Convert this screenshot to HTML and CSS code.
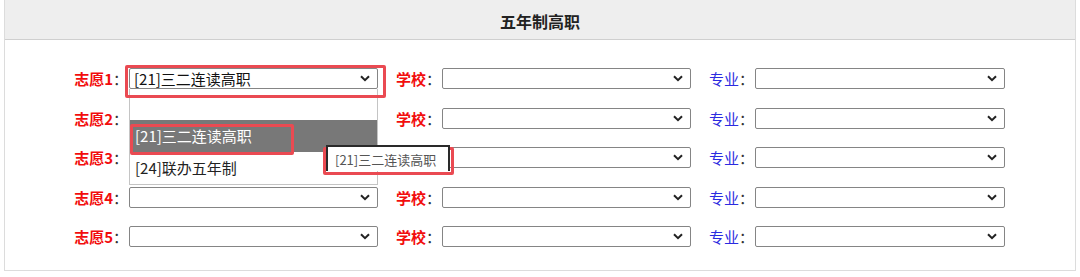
FILE: index.html
```html
<!DOCTYPE html>
<html lang="zh-CN">
<head>
  <meta charset="UTF-8" />
  <title>五年制高职</title>
  <link rel="stylesheet" href="styles.css">
</head>
<body>
  <div class="panel">
    <div class="panel-head">五年制高职</div>

    <div class="panel-body">
      <!-- 志愿1 -->
      <div class="lbl red">志愿1<span class="colon">：</span></div>
      <div class="select-wrap">
        <div class="select"><span>[21]三二连读高职</span><svg class="arrow" width="10" height="7" viewBox="0 0 10 7"><path d="M1 1.2 L5 5.2 L9 1.2" /></svg></div>
        <ul class="options">
          <li></li>
          <li class="hover">[21]三二连读高职</li>
          <li>[24]联办五年制</li>
        </ul>
      </div>
      <div class="lbl red">学校<span class="colon">：</span></div>
      <div class="select"><span></span><svg class="arrow" width="10" height="7" viewBox="0 0 10 7"><path d="M1 1.2 L5 5.2 L9 1.2" /></svg></div>
      <div class="lbl blue">专业<span class="colon">：</span></div>
      <div class="select"><span></span><svg class="arrow" width="10" height="7" viewBox="0 0 10 7"><path d="M1 1.2 L5 5.2 L9 1.2" /></svg></div>

      <!-- 志愿2 -->
      <div class="lbl red">志愿2<span class="colon">：</span></div>
      <div class="select"><span></span><svg class="arrow" width="10" height="7" viewBox="0 0 10 7"><path d="M1 1.2 L5 5.2 L9 1.2" /></svg></div>
      <div class="lbl red">学校<span class="colon">：</span></div>
      <div class="select"><span></span><svg class="arrow" width="10" height="7" viewBox="0 0 10 7"><path d="M1 1.2 L5 5.2 L9 1.2" /></svg></div>
      <div class="lbl blue">专业<span class="colon">：</span></div>
      <div class="select"><span></span><svg class="arrow" width="10" height="7" viewBox="0 0 10 7"><path d="M1 1.2 L5 5.2 L9 1.2" /></svg></div>

      <!-- 志愿3 -->
      <div class="lbl red">志愿3<span class="colon">：</span></div>
      <div class="select"><span></span><svg class="arrow" width="10" height="7" viewBox="0 0 10 7"><path d="M1 1.2 L5 5.2 L9 1.2" /></svg></div>
      <div class="lbl red">学校<span class="colon">：</span></div>
      <div class="select"><span></span><svg class="arrow" width="10" height="7" viewBox="0 0 10 7"><path d="M1 1.2 L5 5.2 L9 1.2" /></svg></div>
      <div class="lbl blue">专业<span class="colon">：</span></div>
      <div class="select"><span></span><svg class="arrow" width="10" height="7" viewBox="0 0 10 7"><path d="M1 1.2 L5 5.2 L9 1.2" /></svg></div>

      <!-- 志愿4 -->
      <div class="lbl red">志愿4<span class="colon">：</span></div>
      <div class="select"><span></span><svg class="arrow" width="10" height="7" viewBox="0 0 10 7"><path d="M1 1.2 L5 5.2 L9 1.2" /></svg></div>
      <div class="lbl red">学校<span class="colon">：</span></div>
      <div class="select"><span></span><svg class="arrow" width="10" height="7" viewBox="0 0 10 7"><path d="M1 1.2 L5 5.2 L9 1.2" /></svg></div>
      <div class="lbl blue">专业<span class="colon">：</span></div>
      <div class="select"><span></span><svg class="arrow" width="10" height="7" viewBox="0 0 10 7"><path d="M1 1.2 L5 5.2 L9 1.2" /></svg></div>

      <!-- 志愿5 -->
      <div class="lbl red">志愿5<span class="colon">：</span></div>
      <div class="select"><span></span><svg class="arrow" width="10" height="7" viewBox="0 0 10 7"><path d="M1 1.2 L5 5.2 L9 1.2" /></svg></div>
      <div class="lbl red">学校<span class="colon">：</span></div>
      <div class="select"><span></span><svg class="arrow" width="10" height="7" viewBox="0 0 10 7"><path d="M1 1.2 L5 5.2 L9 1.2" /></svg></div>
      <div class="lbl blue">专业<span class="colon">：</span></div>
      <div class="select"><span></span><svg class="arrow" width="10" height="7" viewBox="0 0 10 7"><path d="M1 1.2 L5 5.2 L9 1.2" /></svg></div>
    </div>

    <!-- 标注框 -->
    <div class="mark mark-1"></div>
    <div class="mark mark-2"></div>
    <div class="mark mark-3"></div>
    <div class="tip">[21]三二连读高职</div>
  </div>
</body>
</html>
```

FILE: styles.css
```css
body {
  margin: 0;
  background: #fff;
  font-family: "Noto Sans CJK SC", "Noto Sans", sans-serif;
  color: #222;
}

.panel {
  position: relative;
  margin: -1px 4px 0 4px;
  border: 1px solid #dcdcdc;
}

.panel-head {
  height: 36px;
  line-height: 36px;
  padding-top: 3px;
  background: #eeeeee;
  border-bottom: 1px solid #cfcfcf;
  text-align: center;
  font-size: 16px;
  font-weight: bold;
  color: #222;
}

.panel-body {
  display: grid;
  grid-template-columns: 57px 249px 64px 249px 64px 250px;
  row-gap: 18.5px;
  padding: 28px 0 23px 67px;
}

.lbl {
  font-size: 15px;
  font-weight: bold;
  line-height: 21px;
  text-align: right;
  padding-right: 1px;
  white-space: nowrap;
}
.red {
  color: #f20d0d;
}
.blue {
  color: #2b2be0;
  font-weight: normal;
}
.colon {
  color: #333;
  font-weight: normal;
}

.select-wrap {
  position: relative;
}

.select {
  box-sizing: border-box;
  height: 21px;
  display: flex;
  align-items: center;
  padding: 0 7px 0 4px;
  border: 1px solid #858585;
  border-radius: 2px;
  background: #fff;
  font-size: 15px;
  line-height: 19px;
  color: #111;
  white-space: nowrap;
}
.arrow {
  margin-left: auto;
  flex-shrink: 0;
}
.arrow path {
  fill: none;
  stroke: #222;
  stroke-width: 2;
}

.options {
  position: absolute;
  top: 21px;
  left: 0;
  width: 249px;
  box-sizing: border-box;
  margin: 0;
  padding: 0;
  list-style: none;
  background: #fff;
  border: 1px solid #c4c4c4;
  border-top: none;
  z-index: 2;
}
.options li {
  height: 32px;
  line-height: 32px;
  padding-left: 5px;
  font-size: 15px;
  color: #222;
}
.options li:first-child {
  height: 31px;
}
.options li.hover {
  background: #787878;
  color: #fff;
}

.mark {
  position: absolute;
  box-sizing: border-box;
  border: 3px solid #ea4a52;
  border-radius: 2px;
  z-index: 3;
}
.mark-1 {
  left: 120px;
  top: 65px;
  width: 261px;
  height: 33px;
}
.mark-2 {
  left: 125px;
  top: 124px;
  width: 164px;
  height: 31px;
}
.mark-3 {
  left: 318px;
  top: 147px;
  width: 131px;
  height: 28px;
}

.tip {
  position: absolute;
  left: 321px;
  top: 145px;
  width: 124px;
  height: 26px;
  box-sizing: border-box;
  border: 2px solid #2a2a2a;
  border-bottom: none;
  background: #fff;
  padding-left: 7px;
  font-size: 13px;
  line-height: 26px;
  color: #555;
  white-space: nowrap;
  z-index: 4;
}
```
